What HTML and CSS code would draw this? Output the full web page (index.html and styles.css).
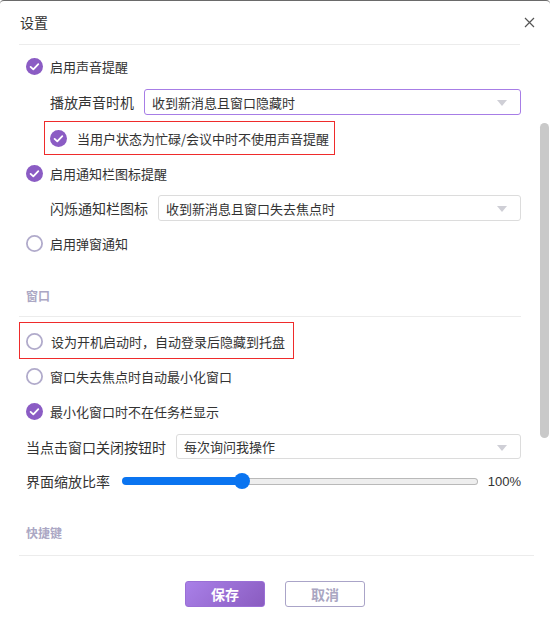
FILE: index.html
```html
<!DOCTYPE html>
<html lang="zh-CN">

<head>
    <meta charset="UTF-8">
    <title>设置</title>
    <link rel="stylesheet" href="styles.css">
</head>

<body>
    <div class="dialog">
        <div class="header">
            <span class="title">设置</span>
            <svg class="close" width="11" height="11" viewBox="0 0 11 11">
                <path d="M1 1 L10 10 M10 1 L1 10" stroke="#555" stroke-width="1.2" fill="none" />
            </svg>
        </div>
        <div class="divider head-line"></div>

        <div class="main">
            <div class="content">
                <div class="check-row r1">
                    <svg class="check" viewBox="0 0 17 17"><circle cx="8.5" cy="8.5" r="8.5" fill="#8b5cc4" /><polyline points="4.6,8.9 7.3,11.4 12.3,6.1" fill="none" stroke="#fff" stroke-width="1.8" stroke-linecap="round" stroke-linejoin="round" /></svg>
                    <span>启用声音提醒</span>
                </div>
                <div class="field-row sub s1">
                    <span class="label">播放声音时机</span>
                    <div class="select focused">
                        <span>收到新消息且窗口隐藏时</span>
                        <i class="arrow"></i>
                    </div>
                </div>
                <div class="mark mark-sub">
                    <svg class="check" viewBox="0 0 17 17"><circle cx="8.5" cy="8.5" r="8.5" fill="#8b5cc4" /><polyline points="4.6,8.9 7.3,11.4 12.3,6.1" fill="none" stroke="#fff" stroke-width="1.8" stroke-linecap="round" stroke-linejoin="round" /></svg>
                    <span>当用户状态为忙碌/会议中时不使用声音提醒</span>
                </div>
                <div class="check-row r4">
                    <svg class="check" viewBox="0 0 17 17"><circle cx="8.5" cy="8.5" r="8.5" fill="#8b5cc4" /><polyline points="4.6,8.9 7.3,11.4 12.3,6.1" fill="none" stroke="#fff" stroke-width="1.8" stroke-linecap="round" stroke-linejoin="round" /></svg>
                    <span>启用通知栏图标提醒</span>
                </div>
                <div class="field-row sub s2">
                    <span class="label">闪烁通知栏图标</span>
                    <div class="select">
                        <span>收到新消息且窗口失去焦点时</span>
                        <i class="arrow"></i>
                    </div>
                </div>
                <div class="check-row r6">
                    <svg class="check" viewBox="0 0 17 17"><circle cx="8.5" cy="8.5" r="7.6" fill="#fff" stroke="#b1abcb" stroke-width="1.8" /></svg>
                    <span>启用弹窗通知</span>
                </div>

                <div class="section-title t1">窗口</div>
                <div class="divider sec-line"></div>

                <div class="mark mark-top">
                    <svg class="check" viewBox="0 0 17 17"><circle cx="8.5" cy="8.5" r="7.6" fill="#fff" stroke="#b1abcb" stroke-width="1.8" /></svg>
                    <span>设为开机启动时，自动登录后隐藏到托盘</span>
                </div>
                <div class="check-row r8">
                    <svg class="check" viewBox="0 0 17 17"><circle cx="8.5" cy="8.5" r="7.6" fill="#fff" stroke="#b1abcb" stroke-width="1.8" /></svg>
                    <span>窗口失去焦点时自动最小化窗口</span>
                </div>
                <div class="check-row r9">
                    <svg class="check" viewBox="0 0 17 17"><circle cx="8.5" cy="8.5" r="8.5" fill="#8b5cc4" /><polyline points="4.6,8.9 7.3,11.4 12.3,6.1" fill="none" stroke="#fff" stroke-width="1.8" stroke-linecap="round" stroke-linejoin="round" /></svg>
                    <span>最小化窗口时不在任务栏显示</span>
                </div>
                <div class="field-row s3">
                    <span class="label">当点击窗口关闭按钮时</span>
                    <div class="select">
                        <span>每次询问我操作</span>
                        <i class="arrow"></i>
                    </div>
                </div>
                <div class="field-row slider-row">
                    <span class="label">界面缩放比率</span>
                    <div class="slider">
                        <div class="fill" style="width: 120px"></div>
                        <div class="rest"></div>
                        <div class="thumb" style="left: 112px"></div>
                    </div>
                    <span class="percent">100%</span>
                </div>

                <div class="section-title t2">快捷键</div>
                <div class="divider sec-line2"></div>
            </div>
            <div class="scrollbar"></div>
        </div>

        <div class="footer">
            <button class="btn primary">保存</button>
            <button class="btn ghost">取消</button>
        </div>
    </div>
</body>

</html>
```

FILE: styles.css
```css
* {
    box-sizing: border-box;
}

body {
    margin: 0;
    font-family: "Noto Sans CJK SC", "Noto Sans", sans-serif;
    color: #333;
    background: #fff;
}

.dialog {
    width: 550px;
    height: 625px;
    background: #fff;
    border-top: 1px solid #6a6a6a;
    border-radius: 4px 4px 0 0;
    overflow: hidden;
}

.header {
    height: 43px;
    display: flex;
    align-items: center;
    justify-content: space-between;
    padding: 0 15px 0 20px;
}

.title {
    font-size: 14px;
    color: #333;
    margin-top: -1px;
}

.close {
    margin-top: -1px;
}

.divider {
    height: 1px;
    background: #ececec;
}

.head-line {
    margin: 0 30px 0 19px;
}

.main {
    display: flex;
}

.content {
    width: 502px;
    margin-left: 19px;
}

.scrollbar {
    width: 9px;
    height: 315px;
    margin: 78px 0 0 19px;
    background: #c9c9c9;
    border-radius: 5px;
}

.check-row {
    display: flex;
    align-items: center;
    height: 24px;
    padding-left: 7px;
    font-size: 13px;
    gap: 7px;
}

.check {
    width: 17px;
    height: 17px;
    flex: none;
}

.r1 { margin-top: 9px; }
.r4 { margin-top: 6px; }
.r6 { margin-top: 10px; }
.r8 { margin-top: 5px; }
.r9 { margin-top: 11px; }

.field-row {
    display: flex;
    align-items: center;
    padding-left: 7px;
}

.field-row.sub {
    padding-left: 31px;
}

.label {
    font-size: 14px;
    color: #333;
    flex: none;
}

.s1 { margin-top: 11px; }
.s1 .label { margin-right: 10px; }
.s2 { margin-top: 10px; }
.s2 .label { margin-right: 10px; }
.s3 { margin-top: 11px; }
.s3 .label { margin-right: 10px; }

.select {
    flex: 1;
    height: 26px;
    border: 1px solid #dcdcdc;
    border-radius: 3px;
    display: flex;
    align-items: center;
    justify-content: space-between;
    padding: 0 13px 0 7px;
    font-size: 13px;
    color: #333;
}

.select.focused {
    border-color: #a77de6;
}

.s3 .select {
    height: 25px;
}

.arrow {
    width: 0;
    height: 0;
    border-left: 5px solid transparent;
    border-right: 5px solid transparent;
    border-top: 6px solid #cfcfd6;
    margin-top: 2px;
}

.mark {
    display: inline-flex;
    align-items: center;
    border: 1px solid #ef2b2b;
    font-size: 13px;
}

.mark-sub {
    margin: 6px 0 0 25px;
    height: 34px;
    padding: 0 5px 0 5px;
    gap: 10px;
}

.mark-top {
    margin-top: 5px;
    height: 37px;
    padding: 2px 8px 0 6px;
    gap: 8px;
}

.section-title {
    font-size: 12px;
    font-weight: bold;
    color: #aba7c4;
    padding-left: 7px;
    height: 18px;
    line-height: 18px;
}

.t1 { margin-top: 32px; }
.t2 { margin-top: 31px; }

.sec-line {
    margin-top: 11px;
}

.sec-line2 {
    margin-top: 13px;
    width: 515px;
}

.slider-row {
    margin-top: 10px;
    height: 24px;
}

.slider {
    position: relative;
    width: 356px;
    height: 16px;
    margin-left: 12px;
    display: flex;
    align-items: center;
}

.slider .fill {
    height: 8px;
    background: #0a74f0;
    border-radius: 4px 0 0 4px;
}

.slider .rest {
    flex: 1;
    height: 7px;
    background: #eeeeee;
    border: 1px solid #b9b9b9;
    border-left: none;
    border-radius: 0 4px 4px 0;
}

.slider .thumb {
    position: absolute;
    top: 0;
    width: 16px;
    height: 16px;
    border-radius: 50%;
    background: #0a74f0;
}

.percent {
    margin-left: auto;
    font-family: "Liberation Sans", Arial, sans-serif;
    font-size: 13px;
    color: #333;
}

.footer {
    display: flex;
    justify-content: center;
    gap: 20px;
    margin-top: 25px;
}

.btn {
    width: 80px;
    height: 26px;
    border-radius: 3px;
    font-family: "Noto Sans CJK SC", sans-serif;
    font-size: 14px;
    font-weight: bold;
    cursor: pointer;
    padding: 0;
}

.primary {
    background: linear-gradient(135deg, #a980e8, #8a5cc0);
    border: 1px solid #9a6fd6;
    color: #fff;
}

.ghost {
    background: #fff;
    border: 1px solid #aaa4c8;
    color: #aaa6c2;
}
```
